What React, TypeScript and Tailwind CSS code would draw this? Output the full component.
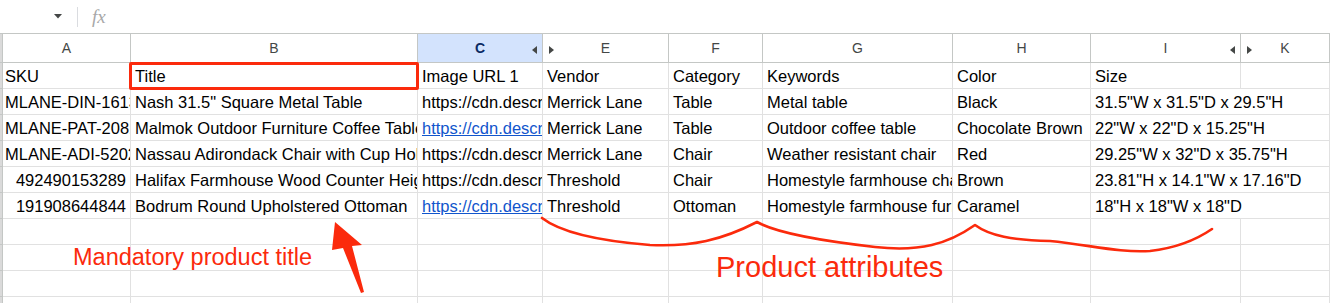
const cols = [
  { letter: "", w: 3 },
  { letter: "A", w: 128 },
  { letter: "B", w: 287 },
  { letter: "C", w: 125, selected: true, arrowRight: true },
  { letter: "E", w: 126, arrowLeft: true },
  { letter: "F", w: 94 },
  { letter: "G", w: 190 },
  { letter: "H", w: 138 },
  { letter: "I", w: 150, arrowRight: true },
  { letter: "K", w: 89, arrowLeft: true },
];

type Cell = { text: string; link?: boolean; right?: boolean };

const rows: Cell[][] = [
  [{ text: "SKU" }, { text: "Title" }, { text: "Image URL 1" }, { text: "Vendor" }, { text: "Category" }, { text: "Keywords" }, { text: "Color" }, { text: "Size" }, { text: "" }],
  [{ text: "MLANE-DIN-16130" }, { text: 'Nash 31.5" Square Metal Table' }, { text: "https://cdn.describely.ai/img/1.jpg" }, { text: "Merrick Lane" }, { text: "Table" }, { text: "Metal table" }, { text: "Black" }, { text: '31.5"W x 31.5"D x 29.5"H' }, { text: "" }],
  [{ text: "MLANE-PAT-20814" }, { text: "Malmok Outdoor Furniture Coffee Table" }, { text: "https://cdn.describely.ai/img/2.jpg", link: true }, { text: "Merrick Lane" }, { text: "Table" }, { text: "Outdoor coffee table" }, { text: "Chocolate Brown" }, { text: '22"W x 22"D x 15.25"H' }, { text: "" }],
  [{ text: "MLANE-ADI-52021" }, { text: "Nassau Adirondack Chair with Cup Holder" }, { text: "https://cdn.describely.ai/img/3.jpg" }, { text: "Merrick Lane" }, { text: "Chair" }, { text: "Weather resistant chair" }, { text: "Red" }, { text: '29.25"W x 32"D x 35.75"H' }, { text: "" }],
  [{ text: "492490153289", right: true }, { text: "Halifax Farmhouse Wood Counter Height Stool" }, { text: "https://cdn.describely.ai/img/4.jpg" }, { text: "Threshold" }, { text: "Chair" }, { text: "Homestyle farmhouse chair" }, { text: "Brown" }, { text: '23.81"H x 14.1"W x 17.16"D' }, { text: "" }],
  [{ text: "191908644844", right: true }, { text: "Bodrum Round Upholstered Ottoman" }, { text: "https://cdn.describely.ai/img/5.jpg", link: true }, { text: "Threshold" }, { text: "Ottoman" }, { text: "Homestyle farmhouse furniture" }, { text: "Caramel" }, { text: '18"H x 18"W x 18"D' }, { text: "" }],
];

const emptyRows = 4;

function LeftTri() {
  return (
    <svg width="5" height="8" viewBox="0 0 5 8" className="absolute right-[5px] top-[12px]">
      <polygon points="5,0 5,8 0,4" fill="#444746" />
    </svg>
  );
}

function RightTri() {
  return (
    <svg width="5" height="8" viewBox="0 0 5 8" className="absolute left-[6px] top-[12px]">
      <polygon points="0,0 0,8 5,4" fill="#444746" />
    </svg>
  );
}

export default function App() {
  return (
    <div className="relative w-[1330px] h-[303px] overflow-hidden bg-white font-['Liberation_Sans',Arial,sans-serif] text-black">
      {/* formula bar */}
      <div className="h-[33px] flex items-center">
        <svg width="8" height="5" viewBox="0 0 8 5" className="ml-[54px]">
          <polygon points="0,0 8,0 4,4.5" fill="#444746" />
        </svg>
        <div className="ml-[15px] w-px h-[20px] bg-[#dadce0]" />
        <span className="ml-[14px] font-['Liberation_Serif',serif] italic text-[19px] text-[#a8a8a8] leading-none">fx</span>
      </div>

      {/* column headers */}
      <div className="flex h-[30px] border-t border-[#c4c7c5]">
        {cols.map((c, i) => (
          <div
            key={i}
            style={{ width: c.w }}
            className={
              "relative shrink-0 h-full border-r border-b border-[#c4c7c5] flex items-center justify-center text-[14px] " +
              (i === 0 ? "bg-[#dadada] " : c.selected ? "bg-[#d3e3fd] text-[#0b2a63] font-bold " : "bg-white text-[#444746] ")
            }
          >
            {c.letter}
            {c.arrowRight && <LeftTri />}
            {c.arrowLeft && <RightTri />}
          </div>
        ))}
      </div>

      {/* data rows */}
      {rows.map((r, ri) => (
        <div key={ri} className="flex h-[26px]">
          <div className="w-[3px] shrink-0 bg-[#dadada] border-r border-b border-[#c4c7c5]" />
          {r.map((cell, ci) => {
            // size text spills into the empty K column, as Sheets does
            const spill = ri > 0 && ci === 7;
            if (ri > 0 && ci === 8) return null;
            const w = spill ? cols[8].w + cols[9].w : cols[ci + 1].w;
            return (
              <div
                key={ci}
                style={{ width: w }}
                className={
                  "shrink-0 h-full overflow-hidden whitespace-nowrap border-r border-b border-[#e1e1e1] flex items-end pb-[2px] text-[16.5px] leading-[19px] " +
                  (cell.right ? "justify-end pr-[4px] " : "justify-start ") +
                  (ci === 0 ? "pl-[2px]" : "pl-[4px]")
                }
              >
                {cell.link ? (
                  <span className="text-[#1155cc] underline">{cell.text}</span>
                ) : (
                  <span>{cell.text}</span>
                )}
              </div>
            );
          })}
        </div>
      ))}
      {Array.from({ length: emptyRows }).map((_, ri) => (
        <div key={"e" + ri} className="flex h-[26px]">
          <div className="w-[3px] shrink-0 bg-[#dadada] border-r border-b border-[#c4c7c5]" />
          {cols.slice(1).map((c, ci) => (
            <div key={ci} style={{ width: c.w }} className="shrink-0 h-full border-r border-b border-[#e1e1e1]" />
          ))}
        </div>
      ))}

      {/* annotations */}
      <div className="absolute left-[129px] top-[62px] w-[290px] h-[28px] border-[3px] border-[#fb2a0c] rounded-[2px] pointer-events-none" />

      <svg className="absolute left-0 top-0 pointer-events-none" width="1330" height="303" viewBox="0 0 1330 303">
        <path
          d="M542 218 C 560 232, 600 241, 650 245 C 692 247, 722 240, 757 222 C 776 233, 822 241, 875 247 C 920 252, 948 244, 975 225 C 990 236, 1012 240, 1050 241 C 1090 245, 1120 253, 1150 251 C 1176 248, 1196 240, 1212 229"
          fill="none"
          stroke="#fb2a0c"
          strokeWidth="2.6"
          strokeLinecap="round"
          strokeLinejoin="round"
        />
        <polygon points="335,222 362,245 352,246 364,292 361,293 343,248 332,250" fill="#fb2a0c" />
      </svg>

      <div className="absolute left-[73px] top-[246px] text-[23.5px] leading-none text-[#fb2a0c] whitespace-nowrap">
        Mandatory product title
      </div>
      <div className="absolute left-[716px] top-[253px] text-[29px] leading-none text-[#fb2a0c] whitespace-nowrap">
        Product attributes
      </div>
    </div>
  );
}
